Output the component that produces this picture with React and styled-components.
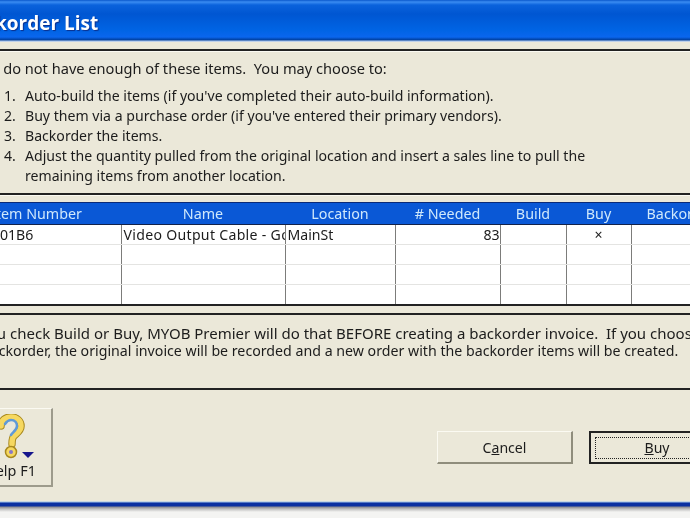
import styled, { createGlobalStyle } from "styled-components";

const GlobalStyle = createGlobalStyle`
  html, body {
    margin: 0;
    padding: 0;
    width: 690px;
    height: 518px;
    overflow: hidden;
    background: #f4f4f2;
  }
`;

const columns = [
  { title: "Item Number", width: 169 },
  { title: "Name", width: 164 },
  { title: "Location", width: 110 },
  { title: "# Needed", width: 105 },
  { title: "Build", width: 66 },
  { title: "Buy", width: 65 },
  { title: "Backorder", width: 100 },
];

const rows = [
  ["01B6", "Video Output Cable - Gold", "MainSt", "83", "", "×", ""],
  ["", "", "", "", "", "", ""],
  ["", "", "", "", "", "", ""],
  ["", "", "", "", "", "", ""],
];

const steps = [
  "Auto-build the items (if you've completed their auto-build information).",
  "Buy them via a purchase order (if you've entered their primary vendors).",
  "Backorder the items.",
  "Adjust the quantity pulled from the original location and insert a sales line to pull the remaining items from another location.",
];

const HelpIcon = () => (
  <IconWrap>
    <svg width="44" height="46" viewBox="0 0 44 46" fill="none">
      <path
        d="M5 12C5 6 10 3 15 3c6 0 10 4 10 9 0 5-4 7-7 10-2 2-2 5-2 8"
        stroke="#a8891f"
        strokeWidth="7.5"
        strokeLinecap="round"
      />
      <path
        d="M5 12C5 6 10 3 15 3c6 0 10 4 10 9 0 5-4 7-7 10-2 2-2 5-2 8"
        stroke="#f6d860"
        strokeWidth="5.5"
        strokeLinecap="round"
      />
      <path
        d="M9 10c2-3 4-4 6-4 4 0 6 3 6 6 0 4-4 6-6 9"
        stroke="#5f9ad8"
        strokeWidth="2.5"
        strokeLinecap="round"
      />
      <circle cx="15" cy="38" r="5.5" fill="#f6d860" stroke="#a8891f" strokeWidth="1.5" />
      <circle cx="15" cy="38" r="2" fill="#8878c8" />
      <path d="M26 38h12l-6 6z" fill="#16168c" />
    </svg>
  </IconWrap>
);

const App = () => (
  <>
    <GlobalStyle />
    <Window>
      <TitleBar>Backorder List</TitleBar>
      <Body>
        <Intro>
          <Lead>You do not have enough of these items.  You may choose to:</Lead>
          <Steps>
            {steps.map((step, index) => (
              <Step key={index}>
                <StepNumber>{index + 1}.</StepNumber>
                <StepText>{step}</StepText>
              </Step>
            ))}
          </Steps>
        </Intro>
        <GridSection>
          <Grid>
            <colgroup>
              {columns.map((col) => (
                <col key={col.title} style={{ width: col.width }} />
              ))}
            </colgroup>
            <thead>
              <tr>
                {columns.map((col) => (
                  <HeaderCell key={col.title}>{col.title}</HeaderCell>
                ))}
              </tr>
            </thead>
            <tbody>
              {rows.map((row, rowIndex) => (
                <tr key={rowIndex}>
                  {row.map((value, colIndex) => (
                    <Cell key={colIndex} $col={colIndex}>
                      {value}
                    </Cell>
                  ))}
                </tr>
              ))}
            </tbody>
          </Grid>
        </GridSection>
        <Note>
          <NoteLine $wide>
            If you check Build or Buy, MYOB Premier will do that BEFORE creating a backorder invoice.  If you choose to
          </NoteLine>
          <NoteLine>
            backorder, the original invoice will be recorded and a new order with the backorder items will be created.
          </NoteLine>
        </Note>
        <Footer>
          <HelpButton>
            <HelpIcon />
            <HelpLabel>Help F1</HelpLabel>
          </HelpButton>
          <Actions>
            <ActionButton>
              C<u>a</u>ncel
            </ActionButton>
            <ActionButton $primary>
              <FocusRing>
                <u>B</u>uy
              </FocusRing>
            </ActionButton>
          </Actions>
        </Footer>
      </Body>
      <BottomEdge />
    </Window>
  </>
);

export default App;

const Window = styled.div`
  width: 790px;
  margin-left: -48px;
  height: 518px;
  display: flex;
  flex-direction: column;
  font-family: "Noto Sans", sans-serif;
  font-size: 14.1px;
  color: #1c1c1c;
  filter: blur(0.35px);
`;

const TitleBar = styled.div`
  height: 42px;
  flex: none;
  box-sizing: border-box;
  padding: 4px 0 0 9px;
  display: flex;
  align-items: center;
  font-family: "Open Sans", sans-serif;
  font-size: 19px;
  font-weight: 700;
  color: #fff;
  text-shadow: 1px 1px 1px #0a2f8c;
  background: linear-gradient(
    #0a58cc 0,
    #3a8cf2 2px,
    #0a62dc 5px,
    #0056d2 14px,
    #0064e4 30px,
    #0a66ee 37px,
    #003e9c 40px,
    #b4cbea 41px,
    #c8d6ea 42px
  );
`;

const Body = styled.div`
  flex: 1;
  background: #ebe8d9;
  display: flex;
  flex-direction: column;
  padding-top: 7px;
`;

const Intro = styled.section`
  height: 144px;
  box-sizing: border-box;
  border-top: 2px solid #222;
  box-shadow: inset 0 1px 0 #fbfaf2;
  padding: 8px 0 0 30px;
`;

const Lead = styled.div`
  height: 27px;
  margin-left: -8px;
  font-size: 14.6px;
  line-height: 18px;
  white-space: pre;
`;

const Steps = styled.ol`
  margin: 0;
  padding: 0;
  list-style: none;
`;

const Step = styled.li`
  display: flex;
  line-height: 20px;
`;

const StepNumber = styled.span`
  width: 21px;
  margin-left: 22px;
  flex: none;
`;

const StepText = styled.span`
  width: 590px;
`;

const GridSection = styled.section`
  height: 122px;
  box-sizing: border-box;
  border-top: 2px solid #222;
  border-bottom: 2px solid #222;
  padding-top: 7px;
  box-shadow: inset 0 1px 0 #fbfaf2;
`;

const Grid = styled.table`
  width: 779px;
  table-layout: fixed;
  border-collapse: collapse;
  background: #fff;
  border-top: 1px solid #0a2a78;
  border-bottom: 2px solid #222;
`;

const HeaderCell = styled.th`
  height: 21px;
  padding: 0;
  background: #0a58d6;
  color: #cfe8fb;
  font-weight: 400;
  font-size: 14.3px;
  text-align: center;
  border-bottom: 1px solid #12224a;
  white-space: nowrap;
  overflow: hidden;
`;

const Cell = styled.td`
  height: 19px;
  padding: ${(p) => (p.$col === 0 ? "0 0 0 48px" : p.$col === 3 ? "0" : "0 2px")};
  border-left: ${(p) => (p.$col === 0 ? "none" : "1.5px solid #7c7c7a")};
  border-bottom: 1px solid #e4e4e2;
  text-align: ${(p) => (p.$col === 3 ? "right" : p.$col === 5 ? "center" : "left")};
  letter-spacing: ${(p) => (p.$col === 1 ? "0.3px" : "0")};
  white-space: nowrap;
  overflow: hidden;
  line-height: 18px;
`;

const Note = styled.div`
  height: 75px;
  box-sizing: border-box;
  padding: 9px 0 0 30px;
  border-bottom: 2px solid #222;
`;

const NoteLine = styled.div`
  font-size: ${(p) => (p.$wide ? "15px" : "14.2px")};
  margin-left: ${(p) => (p.$wide ? "-16px" : "0")};
  line-height: 18px;
  white-space: pre;
`;

const Footer = styled.div`
  flex: 1;
  display: flex;
  align-items: flex-start;
  justify-content: space-between;
`;

const HelpButton = styled.div`
  width: 101px;
  height: 79px;
  margin-top: 18px;
  box-sizing: border-box;
  display: flex;
  flex-direction: column;
  align-items: center;
  justify-content: flex-end;
  padding-bottom: 4px;
  background: #ebe8d9;
  border-top: 1px solid #fbfaf2;
  border-right: 2px solid #9d9b8c;
  border-bottom: 2px solid #9d9b8c;
`;

const IconWrap = styled.div`
  height: 46px;
  margin-bottom: 1px;
  margin-left: 33px;
`;

const HelpLabel = styled.span`
  margin-left: 18px;
  font-size: 14.4px;
  line-height: 20px;
`;

const Actions = styled.div`
  display: flex;
  gap: 16px;
  margin-top: 41px;
  margin-right: 17px;
`;

const ActionButton = styled.div`
  width: 136px;
  height: 33px;
  box-sizing: border-box;
  display: flex;
  align-items: center;
  justify-content: center;
  background: #ebe8d9;
  border: ${(p) => (p.$primary ? "2px solid #222" : "1px solid #fbfaf2")};
  border-right: 2px solid ${(p) => (p.$primary ? "#222" : "#8f8d7c")};
  border-bottom: 2px solid ${(p) => (p.$primary ? "#222" : "#8f8d7c")};
`;

const FocusRing = styled.span`
  width: 124px;
  height: 22px;
  display: flex;
  align-items: center;
  justify-content: center;
  box-sizing: border-box;
  border: 1px dotted #222;
  white-space: pre;
`;

const BottomEdge = styled.div`
  height: 12px;
  flex: none;
  margin-bottom: 6px;
  background: linear-gradient(
    #ebe8d9 0,
    #ebe8d9 1px,
    #9cc0ea 2px,
    #0a2fa0 3px,
    #0a2fa0 6px,
    #8a8a90 7px,
    #c0c0c0 9px,
    #f4f4f2 12px
  );
`;
